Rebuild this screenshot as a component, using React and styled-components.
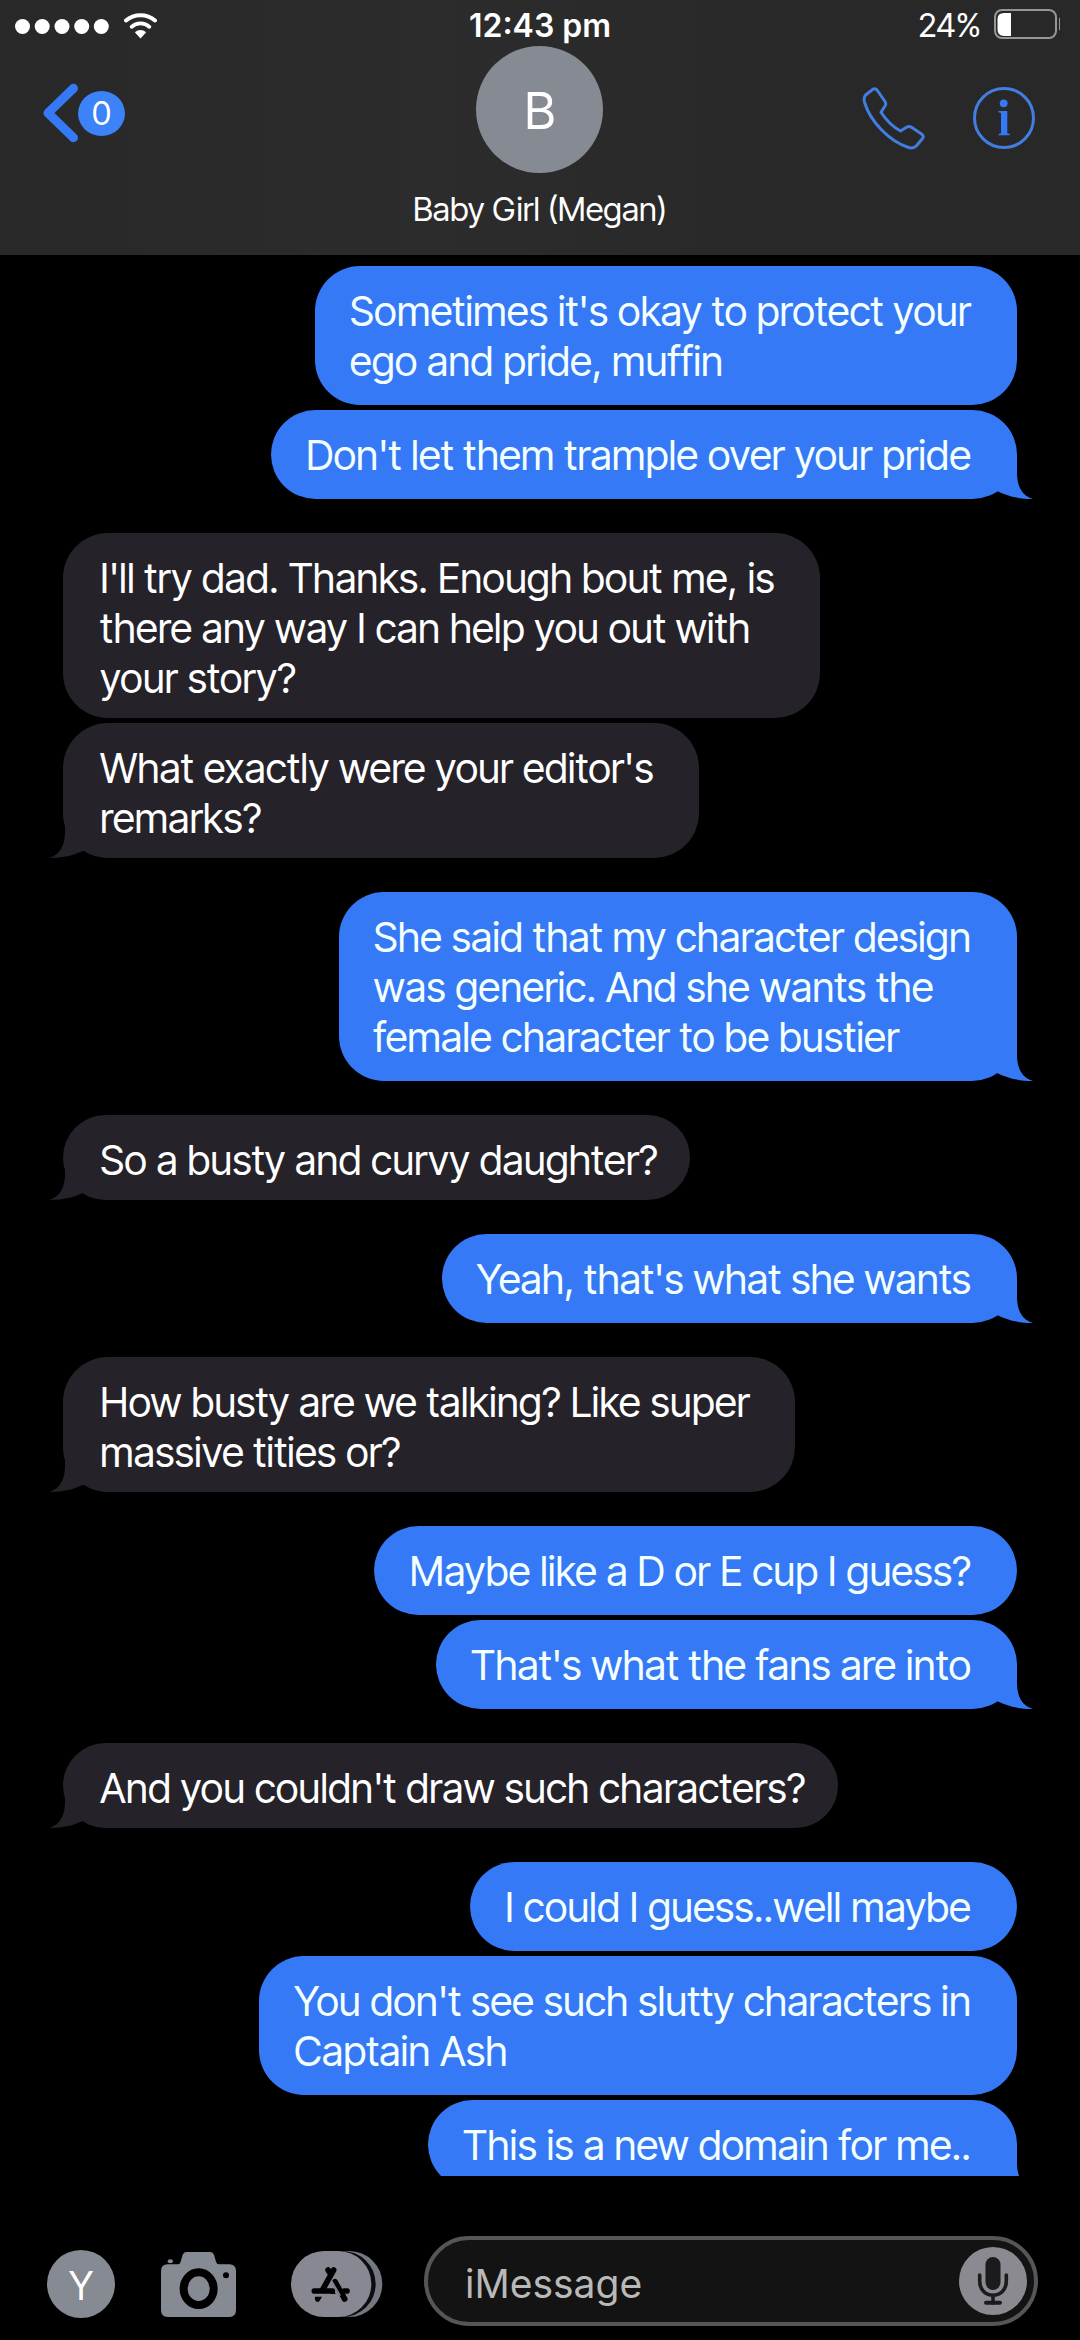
import React from "react";
import styled, { createGlobalStyle, ThemeProvider } from "styled-components";

const theme = {
    font: `"Inter Tight", Inter, "Liberation Sans", sans-serif`,
    wideFont: `Inter, "Liberation Sans", sans-serif`,
    colors: {
        blue: "#3579f6",
        grey: "#868a93",
        received: "#252229",
    },
    fontSizes: {
        small: "33px",
        medium: "41px",
        large: "51px",
    },
};

const GlobalStyle = createGlobalStyle`
    * {
        box-sizing: border-box;
    }
    body {
        margin: 0;
        background: #000000;
    }
    button {
        padding: 0;
        border: none;
        background: none;
        font: inherit;
        color: inherit;
        cursor: pointer;
    }
    svg {
        display: block;
    }
`;

const Page = styled.div`
    height: 100vh;
    display: flex;
    flex-direction: column;
    background: #000000;
    color: #ffffff;
    font-family: ${(props) => props.theme.font};
`;

const Header = styled.header`
    flex: none;
    padding-bottom: 26px;
    background: linear-gradient(90deg, #282828, #2c2c2c 40%, #282828 75%);
`;

const StatusBar = styled.div`
    height: 46px;
    padding: 0 15px;
    display: grid;
    grid-template-columns: 1fr auto 1fr;
    font-size: ${(props) => props.theme.fontSizes.small};
    line-height: 51px;
`;

const Signal = styled.div`
    height: 52px;
    display: flex;
    align-items: center;
    gap: 15px;
`;

const Time = styled.time`
    font-family: ${(props) => props.theme.wideFont};
    font-size: 32px;
    font-weight: 600;
`;

const Battery = styled.div`
    padding-right: 5px;
    display: flex;
    justify-content: flex-end;
    gap: 13px;

    svg {
        margin-top: 9px;
    }
`;

const Nav = styled.nav`
    padding: 0 43px;
    display: grid;
    grid-template-columns: 1fr auto 1fr;
`;

const BackButton = styled.button`
    justify-self: start;
    align-self: start;
    margin-top: 37px;
    display: flex;
    align-items: center;
`;

const Count = styled.span`
    width: 47px;
    height: 45px;
    border-radius: 50%;
    background: #3c82f8;
    font-size: ${(props) => props.theme.fontSizes.small};
    line-height: 45px;
    text-align: center;
`;

const Contact = styled.div`
    display: flex;
    flex-direction: column;
    align-items: center;
    gap: 16px;
`;

const Avatar = styled.div`
    width: ${(props) => props.$size}px;
    height: ${(props) => props.$size}px;
    flex: none;
    border-radius: 50%;
    background: ${(props) => props.theme.colors.grey};
    font-size: ${(props) => props.$fontSize};
    line-height: ${(props) => props.$size + 3}px;
    text-align: center;
`;

const ContactName = styled.h1`
    margin: 0;
    font-size: ${(props) => props.theme.fontSizes.small};
    font-weight: 400;
    line-height: 40px;
`;

const Actions = styled.div`
    padding: 41px 2px 0 0;
    display: flex;
    align-items: flex-start;
    justify-content: flex-end;
    gap: 48px;
`;

const Chat = styled.main`
    flex: 1;
    min-height: 0;
    overflow: hidden;
    padding: 11px 63px 0;
    display: flex;
    flex-direction: column;
    gap: 34px;
`;

const Group = styled.section`
    flex: none;
    display: flex;
    flex-direction: column;
    align-items: ${(props) => (props.$sent ? "flex-end" : "flex-start")};
    gap: 5px;
`;

const Bubble = styled.p`
    position: relative;
    margin: 0;
    padding: ${(props) => {
        if (props.$sent) return "20px 46px 19px 35px";
        return props.$multiline ? "20px 45px 15px 37px" : "20px 32px 15px 37px";
    }};
    border-radius: 45px;
    background: ${(props) =>
        props.$sent ? props.theme.colors.blue : props.theme.colors.received};
    color: ${(props) => (props.$sent ? "#f4ffff" : "#ffffff")};
    font-size: ${(props) => props.theme.fontSizes.medium};
    line-height: 50px;
    white-space: pre-line;
`;

const Tail = styled.svg`
    position: absolute;
    bottom: 0;
    fill: ${(props) =>
        props.$sent ? props.theme.colors.blue : props.theme.colors.received};
    ${(props) => (props.$sent ? "right: -16px;" : "left: -14px; transform: scaleX(-1);")}
`;

const Composer = styled.form`
    flex: none;
    padding: 60px 42px 14px 47px;
    display: flex;
    align-items: center;
    gap: 41px;
`;

const Tools = styled.div`
    padding-top: 6px;
    display: flex;
    align-items: center;
    gap: 46px;
`;

const AppsButton = styled.button`
    margin-left: 9px;
`;

const Field = styled.div`
    flex: 1;
    min-width: 0;
    height: 90px;
    padding: 0 7px 0 37px;
    display: flex;
    align-items: center;
    border: 4px solid #565658;
    border-radius: 45px;
    background: #131313;
`;

const Input = styled.input`
    flex: 1;
    min-width: 0;
    padding: 4px 0 0;
    border: none;
    outline: none;
    background: none;
    color: #ffffff;
    font-family: ${(props) => props.theme.wideFont};
    font-size: 39px;

    &::placeholder {
        color: #b9b9b9;
        opacity: 1;
    }
`;

const conversation = [
    {
        sent: true,
        messages: [
            "Sometimes it's okay to protect your\nego and pride, muffin",
            "Don't let them trample over your pride",
        ],
    },
    {
        sent: false,
        messages: [
            "I'll try dad. Thanks. Enough bout me, is\nthere any way I can help you out with\nyour story?",
            "What exactly were your editor's\nremarks?",
        ],
    },
    {
        sent: true,
        messages: [
            "She said that my character design\nwas generic. And she wants the\nfemale character to be bustier",
        ],
    },
    { sent: false, messages: ["So a busty and curvy daughter?"] },
    { sent: true, messages: ["Yeah, that's what she wants"] },
    {
        sent: false,
        messages: ["How busty are we talking? Like super\nmassive tities or?"],
    },
    {
        sent: true,
        messages: ["Maybe like a D or E cup I guess?", "That's what the fans are into"],
    },
    { sent: false, messages: ["And you couldn't draw such characters?"] },
    {
        sent: true,
        messages: [
            "I could I guess..well maybe",
            "You don't see such slutty characters in\nCaptain Ash",
            "This is a new domain for me..",
        ],
    },
];

const SignalDots = () => (
    <svg width="94" height="15" viewBox="0 0 94 15" fill="#ffffff">
        {[7.5, 27.2, 47, 66.7, 86.3].map((cx) => (
            <circle key={cx} cx={cx} cy="7.5" r="7.5" />
        ))}
    </svg>
);

const WifiIcon = () => (
    <svg width="33" height="26" viewBox="0 0 33 26" fill="none" stroke="#ffffff">
        <path d="M2 7.4C10 0.4 23 0.4 31 7.4" strokeWidth="4" strokeLinecap="round" />
        <path d="M7.6 13.8C12.5 9.2 20.5 9.2 25.4 13.8" strokeWidth="3.8" strokeLinecap="round" />
        <path d="M10.8 19.3Q16.5 14.8 22.2 19.3L16.5 25.6Z" fill="#ffffff" stroke="none" />
    </svg>
);

const BatteryIcon = () => (
    <svg width="66" height="30" viewBox="0 0 66 30">
        <rect x="1" y="1" width="61" height="28" rx="7" fill="none" stroke="#969696" strokeWidth="2" />
        <path d="M17 4H10Q3.5 4 3.5 10V20.5Q3.5 27 10 27H17Z" fill="#ffffff" />
        <path d="M65.5 9V21" stroke="#969696" />
    </svg>
);

const ChevronIcon = () => (
    <svg width="35" height="60" viewBox="0 0 35 60" fill="none">
        <path
            d="M30.5 5.3L5 30L30.5 54.7"
            stroke="#3579f6"
            strokeWidth="9"
            strokeLinecap="round"
            strokeLinejoin="round"
        />
    </svg>
);

const PhoneIcon = () => (
    <svg width="63" height="63" viewBox="0 0 63 63" fill="none">
        <path
            d="M9.7 3.2C11.5 1.6 13.5 1 15 3L23 14.5C24 16 24 17 23.3 18.5L19 25.3C24 33 31 40 38.5 44L44.5 40.3C46.5 39.2 47.8 39.3 49.5 40.3L59.5 47C61.5 48.5 61.8 50 60.3 51.8L54.5 58.8C52.5 61 49.5 61.4 46 60.3C27 54 8 34 2.6 15.5C1.6 12 1.8 10 3.6 8Z"
            stroke="#427de0"
            strokeWidth="3"
            strokeLinejoin="round"
        />
    </svg>
);

const InfoIcon = () => (
    <svg width="62" height="62" viewBox="0 0 62 62">
        <circle cx="31" cy="31" r="29.5" fill="none" stroke="#427de0" strokeWidth="3" />
        <circle cx="30.7" cy="16.3" r="3.9" fill="#3579f6" />
        <path d="M25.5 24H34.3V46.3L36.8 47V48.3H25.5V47L28 46.3V26L25.5 25.3Z" fill="#3579f6" />
    </svg>
);

const CameraIcon = () => (
    <svg width="75" height="65" viewBox="0 0 225 195">
        <path
            d="M20 37H50Q57 37 59 29L65 8Q68 0 76 0H148Q156 0 159 8L165 29Q167 37 175 37H205Q225 37 225 57V175Q225 195 205 195H20Q0 195 0 175V57Q0 37 20 37Z"
            fill="#868a93"
        />
        <ellipse cx="28" cy="28" rx="8" ry="6" fill="#868a93" />
        <ellipse cx="113" cy="110" rx="45" ry="49" fill="none" stroke="#000000" strokeWidth="24" />
        <circle cx="195" cy="70" r="9" fill="#000000" />
    </svg>
);

const AppsIcon = () => (
    <svg width="92" height="66" viewBox="0 0 276 198">
        <rect x="33" width="241" height="198" rx="99" fill="#747880" />
        <rect x="13" width="241" height="198" rx="99" fill="#0b0d12" />
        <rect width="241" height="198" rx="99" fill="#878892" />
        <g stroke="#000000" strokeWidth="17" strokeLinecap="round">
            <path d="M111 57L119 69M128 57L95 116" />
            <path d="M70 120H124" />
            <path d="M160 120H168" />
            <path d="M132 92L161 144" />
        </g>
        <path d="M124 110L134 129H118Z" fill="#000000" />
        <path d="M72 137H93L86 149Q80 156 74 150Q70 145 72 137Z" fill="#000000" />
        <path d="M121 88L148 134" stroke="#878892" strokeWidth="4" />
    </svg>
);

const MicIcon = () => (
    <svg width="68" height="68" viewBox="0 0 68 68" fill="none">
        <circle cx="34" cy="34" r="34" fill="#8b8a90" />
        <rect x="26.5" y="10" width="15" height="33" rx="7.5" fill="#1b1b1d" />
        <path
            d="M20.7 28V34C20.7 53 47.3 53 47.3 34V28M34 48V56"
            stroke="#1b1b1d"
            strokeWidth="3.6"
            strokeLinecap="round"
        />
        <path d="M27 55.7H41" stroke="#1b1b1d" strokeWidth="4" strokeLinecap="round" />
    </svg>
);

const MessageTail = ({ sent }) => (
    <Tail $sent={sent} width="46" height="46" viewBox="0 0 46 46" aria-hidden="true">
        <path d="M10 38V0H30V20C30 33 35 43 46 46C31 46 20 43 10 38Z" />
    </Tail>
);

const ChatHeader = () => (
    <Header>
        <StatusBar>
            <Signal>
                <SignalDots />
                <WifiIcon />
            </Signal>
            <Time>12:43 pm</Time>
            <Battery>
                <span>24%</span>
                <BatteryIcon />
            </Battery>
        </StatusBar>
        <Nav>
            <BackButton type="button" aria-label="Back">
                <ChevronIcon />
                <Count>0</Count>
            </BackButton>
            <Contact>
                <Avatar $size={127} $fontSize={theme.fontSizes.large}>
                    B
                </Avatar>
                <ContactName>Baby Girl (Megan)</ContactName>
            </Contact>
            <Actions>
                <button type="button" aria-label="Call">
                    <PhoneIcon />
                </button>
                <button type="button" aria-label="Details">
                    <InfoIcon />
                </button>
            </Actions>
        </Nav>
    </Header>
);

const MessageGroup = ({ sent, messages }) => (
    <Group $sent={sent}>
        {messages.map((message, index) => (
            <Bubble key={index} $sent={sent} $multiline={message.includes("\n")}>
                {message}
                {index === messages.length - 1 && <MessageTail sent={sent} />}
            </Bubble>
        ))}
    </Group>
);

const ChatComposer = () => (
    <Composer onSubmit={(e) => e.preventDefault()}>
        <Tools>
            <Avatar $size={68} $fontSize="39px">
                Y
            </Avatar>
            <button type="button" aria-label="Camera">
                <CameraIcon />
            </button>
            <AppsButton type="button" aria-label="Apps">
                <AppsIcon />
            </AppsButton>
        </Tools>
        <Field>
            <Input type="text" placeholder="iMessage" aria-label="iMessage" />
            <button type="button" aria-label="Record audio">
                <MicIcon />
            </button>
        </Field>
    </Composer>
);

const App = () => (
    <ThemeProvider theme={theme}>
        <GlobalStyle />
        <Page>
            <ChatHeader />
            <Chat>
                {conversation.map((group, index) => (
                    <MessageGroup key={index} {...group} />
                ))}
            </Chat>
            <ChatComposer />
        </Page>
    </ThemeProvider>
);

export default App;
